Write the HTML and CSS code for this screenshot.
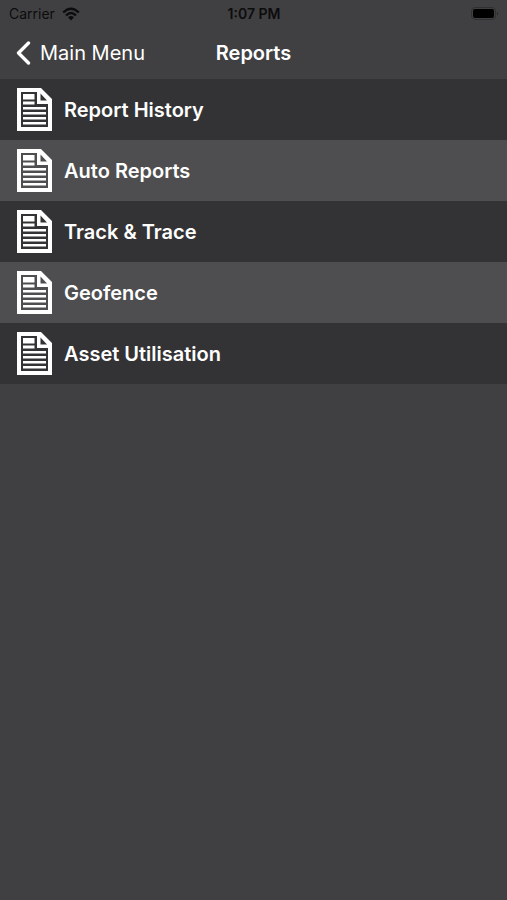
FILE: index.html
```html
<!DOCTYPE html>
<html lang="en">
<head>
<meta charset="utf-8">
<meta name="viewport" content="width=device-width, initial-scale=1">
<title>Reports</title>
<link rel="stylesheet" href="styles.css">
</head>
<body>
<svg class="defs" aria-hidden="true">
  <symbol id="doc" viewBox="0 0 35 43">
    <path fill-rule="evenodd" d="M0 0H24L35 11V43H0ZM4 4V39H31V16H20V4ZM23.500 5.500V12.500H30Z"/>
    <path d="M6 6H17.500V11.500H6ZM6 13.500H17.500V16.500H6ZM6 19H29V21.500H6ZM6 24H29V26.500H6ZM6 29H29V31.500H6ZM6 34H29V36.500H6Z"/>
  </symbol>
</svg>
<div class="status">
  <div class="carrier">
    <span>Carrier</span>
    <svg class="wifi" viewBox="0 0 18 14" aria-hidden="true">
      <path d="M1.200 5.500Q9-2.200 16.800 5.500M4 8.500Q9 3.400 14 8.500" fill="none" stroke="currentColor" stroke-width="2.400"/>
      <path d="M6 10.300Q9 7.600 12 10.300L9 13.500Z" fill="currentColor"/>
    </svg>
  </div>
  <span class="time">1:07 PM</span>
  <svg class="battery" viewBox="0 0 28 13" aria-hidden="true">
    <rect x=".5" y=".5" width="24" height="12" rx="3.500" fill="none" stroke="#303032"/>
    <rect x="2" y="2" width="21" height="9" rx="2" fill="#000"/>
    <path d="M26 4.500Q28 6.500 26 8.500Z" fill="#252527"/>
  </svg>
</div>
<header class="nav">
  <a class="back" href="#">
    <svg class="chevron" viewBox="0 0 15 24" aria-hidden="true"><path d="M12.500 2L2.500 12L12.500 22" fill="none" stroke="currentColor" stroke-width="3.300" stroke-linecap="round" stroke-linejoin="round"/></svg>
    <span>Main Menu</span>
  </a>
  <h1 class="title">Reports</h1>
</header>
<main>
  <nav class="list" aria-label="Reports">
    <a class="row" href="#"><svg class="doc" aria-hidden="true"><use href="#doc"/></svg><span>Report History</span></a>
    <a class="row" href="#"><svg class="doc" aria-hidden="true"><use href="#doc"/></svg><span>Auto Reports</span></a>
    <a class="row" href="#"><svg class="doc" aria-hidden="true"><use href="#doc"/></svg><span>Track &amp; Trace</span></a>
    <a class="row" href="#"><svg class="doc" aria-hidden="true"><use href="#doc"/></svg><span>Geofence</span></a>
    <a class="row" href="#"><svg class="doc" aria-hidden="true"><use href="#doc"/></svg><span>Asset Utilisation</span></a>
  </nav>
</main>
</body>
</html>
```
FILE: styles.css
```css
* {
  box-sizing: border-box;
}

body {
  margin: 0;
  min-height: 100vh;
  background: #404042;
  color: #fff;
  font-family: Inter, "Liberation Sans", sans-serif;
  font-size: 20px;
  line-height: 24px;
}

a {
  color: inherit;
  text-decoration: none;
}

.defs {
  display: block;
  width: 0;
  height: 0;
}

.status,
.nav {
  display: grid;
  grid-template-columns: 1fr auto 1fr;
  align-items: center;
}

.status {
  height: 27px;
  padding: 0 8px 0 9px;
  color: #0c0c0d;
  font-size: 14px;
}

.carrier {
  display: flex;
  align-items: center;
  gap: 7px;
}

.wifi {
  width: 18px;
  height: 14px;
}

.time {
  font-weight: 600;
}

.battery {
  justify-self: end;
  width: 28px;
  height: 13px;
}

.nav {
  height: 52px;
  padding: 0 16px;
}

.back {
  display: flex;
  align-items: center;
  gap: 9px;
}

.chevron {
  width: 15px;
  height: 24px;
}

.title {
  margin: 0;
  font-size: 20px;
  font-weight: 600;
}

.row {
  display: flex;
  align-items: center;
  gap: 12px;
  height: 61px;
  padding: 0 17px;
  background: #333335;
  font-weight: 600;
}

.row:nth-child(even) {
  background: #4e4e50;
}

.doc {
  width: 35px;
  height: 43px;
  fill: #fff;
}
```
